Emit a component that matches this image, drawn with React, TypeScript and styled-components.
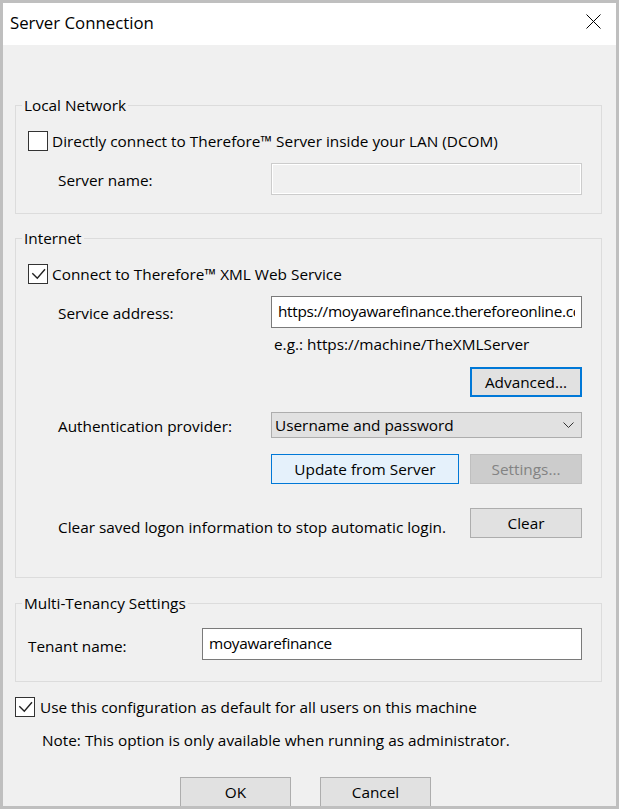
import React from "react";
import styled, { createGlobalStyle } from "styled-components";

const Global = createGlobalStyle`
  html, body { margin: 0; padding: 0; background: #f0f0f0; }
  body {
    font-family: "Open Sans", "Noto Sans", sans-serif;
    font-size: 15.35px;
    color: #000;
  }
  * { box-sizing: border-box; }
`;

const Window = styled.div`
  width: 619px;
  height: 809px;
  border: 3px solid #bfbfbf;
  display: flex;
  flex-direction: column;
  overflow: hidden;
  background: #f0f0f0;
`;

const TitleBar = styled.div`
  height: 42px;
  flex-shrink: 0;
  background: #ffffff;
  display: flex;
  align-items: center;
  justify-content: space-between;
  padding: 0 15px 0 7px;
`;

const Title = styled.span`
  font-size: 16.8px;
  line-height: 22px;
  margin-top: -2px;
`;

const CloseButton = styled.div`
  align-self: flex-start;
  margin-top: 11px;
  width: 15px;
  height: 15px;
  display: flex;
`;

const Body = styled.div`
  flex: 1;
  display: flex;
  flex-direction: column;
  padding: 50px 14px 0 12px;
  overflow: hidden;
`;

const Group = styled.fieldset<{ $mt: number }>`
  margin: ${(p) => p.$mt}px 0 0 0;
  padding: 0;
  border: 1px solid #dcdcdc;
  min-width: 0;
`;

const Legend = styled.legend`
  margin-left: 6px;
  padding: 0 2px;
  height: 21px;
  line-height: 21px;
`;

const GroupContent = styled.div<{ $pt: number; $pb: number }>`
  display: flex;
  flex-direction: column;
  padding: ${(p) => p.$pt}px 19px ${(p) => p.$pb}px 12px;
`;

const CheckRow = styled.div<{ $mt?: number; $gap?: number }>`
  display: flex;
  align-items: center;
  gap: ${(p) => p.$gap ?? 4}px;
  height: 20px;
  margin-top: ${(p) => p.$mt ?? 0}px;
  line-height: 20px;
  white-space: nowrap;
`;

const Box = styled.span`
  width: 20px;
  height: 20px;
  flex-shrink: 0;
  border: 1px solid #333333;
  background: #ffffff;
  display: flex;
`;

const Row = styled.div<{ $mt?: number; $indent?: number; $h?: number; $justify?: string }>`
  display: flex;
  align-items: center;
  justify-content: ${(p) => p.$justify ?? "flex-start"};
  margin-top: ${(p) => p.$mt ?? 0}px;
  padding-left: ${(p) => p.$indent ?? 30}px;
  height: ${(p) => p.$h ?? 32}px;
  gap: 11px;
`;

const FieldLabel = styled.span<{ $w?: number; $shift?: number }>`
  width: ${(p) => (p.$w ? `${p.$w}px` : "auto")};
  flex: ${(p) => (p.$w ? "0 0 auto" : "1")};
  line-height: 20px;
  padding-top: ${(p) => p.$shift ?? 2}px;
  white-space: nowrap;
`;

const TextInput = styled.input<{ $w: number }>`
  width: ${(p) => p.$w}px;
  height: 32px;
  border: 1px solid #7a7a7a;
  background: #ffffff;
  font: inherit;
  letter-spacing: -0.3px;
  color: #000;
  padding: 0 6px 2px 6px;
  margin: 0;
  outline: none;
  border-radius: 0;
`;

const DisabledInput = styled.div`
  width: 311px;
  height: 32px;
  border: 1px solid #cccccc;
  box-shadow: inset 0 0 0 1px #ffffff;
  background: #f0f0f0;
`;

const Hint = styled.div`
  margin-top: 6px;
  padding-left: 246px;
  height: 20px;
  line-height: 20px;
  white-space: nowrap;
`;

const ComboBox = styled.div`
  width: 311px;
  height: 26px;
  border: 1px solid #adadad;
  background: #e1e1e1;
  display: flex;
  align-items: center;
  justify-content: space-between;
  padding: 0 7px 1px 3px;
  line-height: 20px;
`;

const Button = styled.div<{ $w: number; $variant?: "default" | "hover" | "disabled" }>`
  width: ${(p) => p.$w}px;
  height: 30px;
  flex-shrink: 0;
  display: flex;
  align-items: center;
  justify-content: center;
  line-height: 20px;
  padding-bottom: 1px;
  background: ${(p) => (p.$variant === "hover" ? "#e5f1fb" : p.$variant === "disabled" ? "#cccccc" : "#e1e1e1")};
  color: ${(p) => (p.$variant === "disabled" ? "#838383" : "#000")};
  border: ${(p) =>
    p.$variant === "default"
      ? "2px solid #0078d7"
      : p.$variant === "hover"
      ? "1px solid #0078d7"
      : p.$variant === "disabled"
      ? "1px solid #bfbfbf"
      : "1px solid #adadad"};
`;

const Note = styled.div`
  margin-top: 13px;
  padding-left: 27px;
  height: 20px;
  line-height: 20px;
  white-space: nowrap;
`;

const DialogButtons = styled.div`
  margin-top: 27px;
  padding-left: 165px;
  display: flex;
  gap: 29px;
  flex-shrink: 0;
`;

const Check = ({ checked }: { checked?: boolean }) => (
  <Box>
    {checked && (
      <svg width="18" height="18" viewBox="0 0 18 18">
        <polyline points="3.3,8.3 8.3,13.3 16,4.3" fill="none" stroke="#222" strokeWidth="1.4" />
      </svg>
    )}
  </Box>
);

export default function App() {
  return (
    <>
      <Global />
      <Window>
        <TitleBar>
          <Title>Server Connection</Title>
          <CloseButton>
            <svg width="15" height="15" viewBox="0 0 15 15">
              <path d="M0.5 0.5 L14.5 14.5 M14.5 0.5 L0.5 14.5" stroke="#000" strokeWidth="1" />
            </svg>
          </CloseButton>
        </TitleBar>
        <Body>
          <Group $mt={0}>
            <Legend>Local Network</Legend>
            <GroupContent $pt={15} $pb={18}>
              <CheckRow>
                <Check />
                <span>Directly connect to Therefore™ Server inside your LAN (DCOM)</span>
              </CheckRow>
              <Row $mt={12}>
                <FieldLabel $w={202}>Server name:</FieldLabel>
                <DisabledInput />
              </Row>
            </GroupContent>
          </Group>

          <Group $mt={14}>
            <Legend>Internet</Legend>
            <GroupContent $pt={15} $pb={39}>
              <CheckRow>
                <Check checked />
                <span>Connect to Therefore™ XML Web Service</span>
              </CheckRow>
              <Row $mt={12}>
                <FieldLabel $w={202}>Service address:</FieldLabel>
                <TextInput $w={311} readOnly value="https://moyawarefinance.thereforeonline.com/theservice/v0001/restun" />
              </Row>
              <Hint>e.g.: https://machine/TheXMLServer</Hint>
              <Row $mt={13} $h={30} $justify="flex-end" $indent={0}>
                <Button $w={112} $variant="default">Advanced...</Button>
              </Row>
              <Row $mt={15} $h={26}>
                <FieldLabel $w={202}>Authentication provider:</FieldLabel>
                <ComboBox>
                  <span>Username and password</span>
                  <svg width="11" height="6" viewBox="0 0 11 6">
                    <polyline points="0.5,0.5 5.5,5.5 10.5,0.5" fill="none" stroke="#333" strokeWidth="1" />
                  </svg>
                </ComboBox>
              </Row>
              <Row $mt={16} $h={30} $indent={243}>
                <Button $w={188} $variant="hover">Update from Server</Button>
                <Button $w={112} $variant="disabled">Settings...</Button>
              </Row>
              <Row $mt={24} $h={30}>
                <FieldLabel $shift={8}>Clear saved logon information to stop automatic login.</FieldLabel>
                <Button $w={112}>Clear</Button>
              </Row>
            </GroupContent>
          </Group>

          <Group $mt={15}>
            <Legend>Multi-Tenancy Settings</Legend>
            <GroupContent $pt={14} $pb={21}>
              <Row $indent={0}>
                <FieldLabel $w={163} $shift={3}>Tenant name:</FieldLabel>
                <TextInput $w={380} readOnly value="moyawarefinance" />
              </Row>
            </GroupContent>
          </Group>

          <CheckRow $mt={15} $gap={5}>
            <Check checked />
            <span>Use this configuration as default for all users on this machine</span>
          </CheckRow>
          <Note>Note: This option is only available when running as administrator.</Note>
          <DialogButtons>
            <Button $w={111}>OK</Button>
            <Button $w={111}>Cancel</Button>
          </DialogButtons>
        </Body>
      </Window>
    </>
  );
}
